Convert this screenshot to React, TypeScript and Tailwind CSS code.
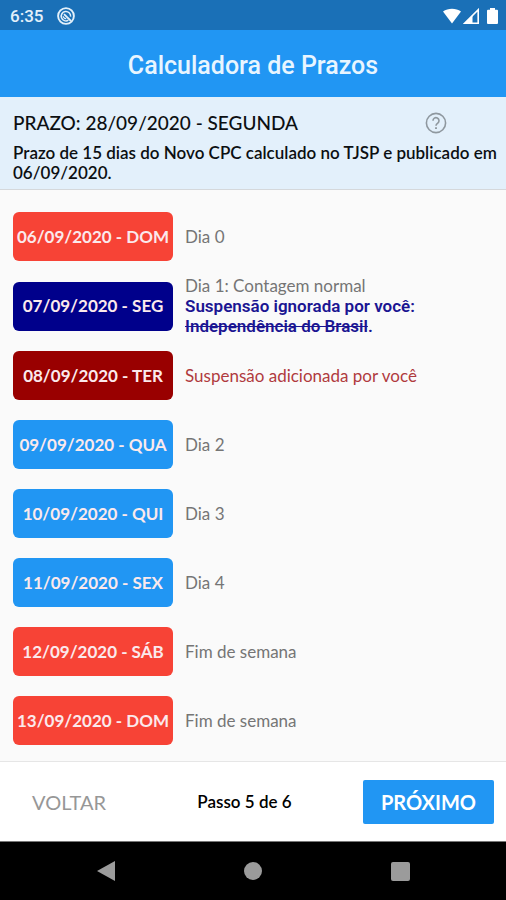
import { clsx } from "clsx";

type Tone = "red" | "navy" | "maroon" | "blue";

interface Day {
  label: string;
  tone: Tone;
  note: string;
  ignored?: string;
}

const days: Day[] = [
  { label: "06/09/2020 - DOM", tone: "red", note: "Dia 0" },
  { label: "07/09/2020 - SEG", tone: "navy", note: "Dia 1: Contagem normal", ignored: "Independência do Brasil" },
  { label: "08/09/2020 - TER", tone: "maroon", note: "Suspensão adicionada por você" },
  { label: "09/09/2020 - QUA", tone: "blue", note: "Dia 2" },
  { label: "10/09/2020 - QUI", tone: "blue", note: "Dia 3" },
  { label: "11/09/2020 - SEX", tone: "blue", note: "Dia 4" },
  { label: "12/09/2020 - SÁB", tone: "red", note: "Fim de semana" },
  { label: "13/09/2020 - DOM", tone: "red", note: "Fim de semana" },
];

const toneClass: Record<Tone, string> = {
  red: "bg-[#f74336]",
  navy: "bg-[#00008b]",
  maroon: "bg-[#990000]",
  blue: "bg-[#2196f3]",
};

function StatusBar() {
  return (
    <div className="flex h-[30px] items-center bg-[#1a70b7] pt-0.5 pr-2 pl-2.5 text-white">
      <span className="font-['Roboto',sans-serif] text-[17px] leading-5 font-medium text-[#e3f0fa]">6:35</span>
      <svg className="ml-3.5 size-[18px]" viewBox="0 0 18 18" fill="none" stroke="#e3f0fa">
        <circle cx="9" cy="9" r="7.9" strokeWidth="1.9" />
        <path d="M11.4 13.2A4.7 4.7 0 1 1 13.6 9.6" strokeWidth="1.5" />
        <path d="M7 7.2L14 14" strokeWidth="1.8" />
        <path d="M6.2 9.3a2.5 2.5 0 0 0 3 2.2" strokeWidth="1.3" />
      </svg>
      <div className="ml-auto flex items-center">
        <svg className="h-[18px] w-[18px]" viewBox="0 0 18 18" fill="currentColor">
          <path d="M0 4.6C5 .8 13 .8 18 4.6L9 16.5z" />
        </svg>
        <svg className="ml-0.5 size-[17px]" viewBox="0 0 17 17" fill="none" stroke="currentColor" strokeWidth="1.6">
          <path d="M1.8 15.2H15.2V1.8z" />
          <path d="M1 16L9.5 7.500V16z" fill="currentColor" stroke="none" />
        </svg>
        <svg className="ml-[7px] h-[18px] w-[11px]" viewBox="0 0 11 18" fill="currentColor">
          <path d="M3 1h5v1.8h2q1 0 1 1V16q0 1-1 1H1q-1 0-1-1V3.8q0-1 1-1h2z" />
        </svg>
      </div>
    </div>
  );
}

function Summary() {
  return (
    <section className="border-b border-[#d5d8db] bg-[#e3f0fb] px-[13px] pt-3.5 pb-1.5 text-[#0c0f12]">
      <div className="flex items-center">
        <h2 className="flex-1 text-[19px] leading-6 font-medium">PRAZO: 28/09/2020 - SEGUNDA</h2>
        <button type="button" aria-label="Ajuda" className="mr-[46px] text-[#8f989f]">
          <svg className="size-[22px]" viewBox="0 0 22 22" fill="none" stroke="currentColor" strokeWidth="1.6">
            <circle cx="11" cy="11" r="9.6" />
            <path d="M8 8.8a3 3 0 1 1 4.8 2.3c-1.1.8-1.8 1.3-1.8 2.7" />
            <path d="M11 15.2v1.9" strokeWidth="1.9" />
          </svg>
        </button>
      </div>
      <p className="mt-2 -mr-3 text-[17px] leading-5 font-semibold">
        Prazo de 15 dias do Novo CPC calculado no TJSP e publicado em 06/09/2020.
      </p>
    </section>
  );
}

function DayRow({ day }: { day: Day }) {
  return (
    <li className="flex min-h-[69px] items-center gap-3">
      <button
        type="button"
        className={clsx(
          "h-[49px] w-40 shrink-0 rounded-md text-[17px] leading-6 font-bold whitespace-nowrap text-[#fbe9ec]",
          toneClass[day.tone]
        )}
      >
        {day.label}
      </button>
      <div className={clsx("py-[5px] text-[17px] leading-5", day.tone === "maroon" ? "text-[#b03a3e]" : "text-[#757575]")}>
        <p>{day.note}</p>
        {day.ignored && (
          <p className="font-['Roboto',sans-serif] font-semibold text-[#1b1592]">
            Suspensão ignorada por você:
            <br />
            <s>{day.ignored}</s>.
          </p>
        )}
      </div>
    </li>
  );
}

function NavBar() {
  return (
    <nav className="flex h-[59px] items-center justify-around border-t border-[#777] bg-black px-8 text-[#9b9b9b]">
      <button type="button" aria-label="Voltar">
        <svg className="size-5" viewBox="0 0 20 20" fill="currentColor">
          <path d="M1 10L19 0v20z" />
        </svg>
      </button>
      <button type="button" aria-label="Início" className="size-[18px] rounded-full bg-[#9b9b9b]" />
      <button type="button" aria-label="Recentes" className="size-[19px] rounded-xs bg-[#9b9b9b]" />
    </nav>
  );
}

export default function App() {
  return (
    <div className="flex min-h-screen flex-col bg-[#fafafa] font-['Lato',sans-serif]">
      <StatusBar />
      <header className="flex h-[67px] items-center justify-center bg-[#2196f3] pt-1">
        <h1 className="font-['Roboto',sans-serif] text-[25px] leading-8 font-medium text-[#e8f5ff]">Calculadora de Prazos</h1>
      </header>
      <Summary />
      <ul className="flex-1 px-[13px] pt-3">
        {days.map((day) => (
          <DayRow key={day.label} day={day} />
        ))}
      </ul>
      <footer className="flex h-20 items-center justify-between border-t border-[#e6e6e6] bg-white px-3">
        <button type="button" className="px-5 py-2 text-[20px] leading-6 text-[#979797]">
          VOLTAR
        </button>
        <span className="text-[17px] leading-5 font-semibold text-black">Passo 5 de 6</span>
        <button
          type="button"
          className="h-11 rounded-xs bg-[#2196f3] px-[18px] text-[20px] leading-6 font-bold text-white"
        >
          PRÓXIMO
        </button>
      </footer>
      <NavBar />
    </div>
  );
}
